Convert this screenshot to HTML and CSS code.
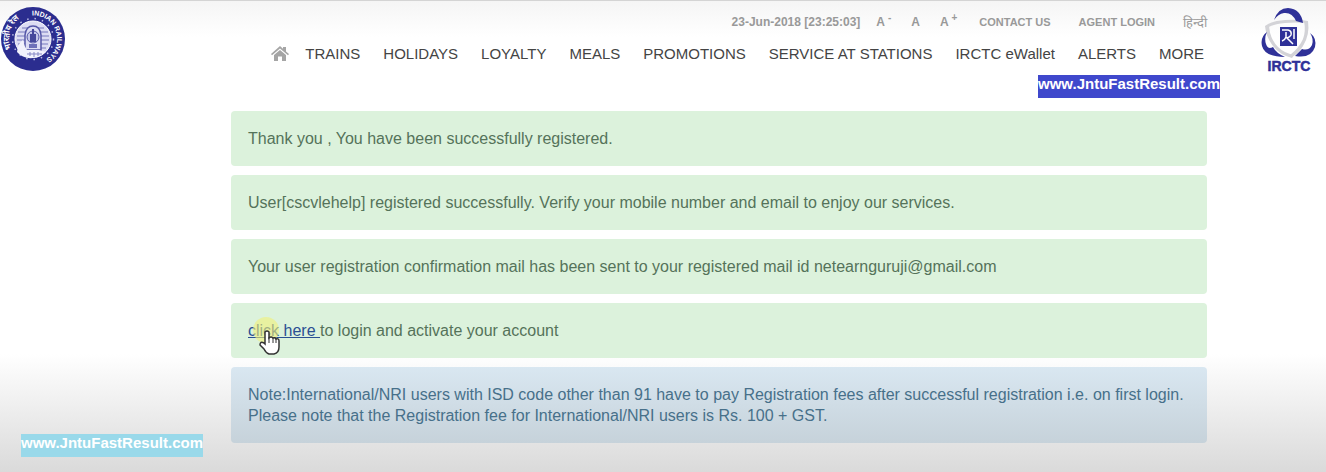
FILE: index.html
```html
<!DOCTYPE html>
<html lang="en">
<head>
    <meta charset="UTF-8">
    <title>IRCTC Registration</title>
    <link rel="stylesheet" href="styles.css">
</head>
<body>
    <header class="header">
        <a href="#" class="logo-rail" aria-label="Indian Railways">
            <svg width="66" height="66" viewBox="0 0 66 66">
                <defs>
                    <path id="arcRight" d="M32,9.500 A23.500,23.500 0 0 1 44,54"/>
                    <path id="arcLeft" d="M11,43 A24,24 0 0 1 27,9.700"/>
                </defs>
                <circle cx="33" cy="33" r="32" fill="#2b2d8f"/>
                <circle cx="33" cy="33" r="20.500" fill="none" stroke="#b9bbe4" stroke-width="1.500" stroke-dasharray="1.500 6"/>
                <circle cx="33" cy="33" r="18" fill="#dcdcf3" stroke="#fff" stroke-width="1"/>
                <path d="M18,26 H48 M17,30 H49 M17,34 H49 M18,38 H48 M20,42 H46 M22,22 H44" stroke="#7779bd" stroke-width="1"/>
                <!-- engine -->
                <path d="M25,44 V29 Q26,20 33,20 Q40,20 41,29 V44 Z" fill="#dcdcf3" stroke="#5557a8" stroke-width="1.500"/>
                <circle cx="33" cy="31" r="6" fill="#c3c5e8" stroke="#5557a8"/>
                <path d="M32,23 H34 V28 H36 V36 H30 V28 H32 Z" fill="#45479b"/>
                <path d="M29,38 H37 V42 H29 Z" fill="#6d6fb8"/>
                <path d="M17,46 Q18,37 23,34 Q24,40 27,44 H39 L46,46 Q40,52 33,52 Q23,53 17,46 Z" fill="#f2f2fc"/>
                <path d="M27,48 H42 M30,46 V50 M34,46 V51 M38,46 V50" stroke="#8587c5"/>
                <text class="seal-text"><textPath href="#arcRight">INDIAN RAILWAYS</textPath></text>
                <text class="seal-text seal-hindi" lang="hi"><textPath href="#arcLeft">भारतीय रेल</textPath></text>
            </svg>
        </a>

        <div class="header-main">
            <div class="topbar">
                <span class="date">23-Jun-2018 [23:25:03]</span>
                <div class="font-size">
                    <a href="#">A <sup>-</sup></a>
                    <a href="#">A</a>
                    <a href="#">A <sup>+</sup></a>
                </div>
                <div class="top-links">
                    <a href="#">CONTACT US</a>
                    <a href="#">AGENT LOGIN</a>
                    <a href="#" class="hindi" lang="hi">हिन्दी</a>
                </div>
            </div>
            <nav class="nav">
                <a href="#" class="home" aria-label="Home">
                    <svg width="18" height="16" viewBox="0 0 18 16">
                        <path d="M0,8 L9,0 L12,2.700 V1 H15 V5.400 L18,8 L17,9.300 L9,2.400 L1,9.300 Z" fill="#a5a5a5"/>
                        <path d="M3,9 L9,4 L15,9 V15 H11 V10.500 H7 V15 H3 Z" fill="#a5a5a5"/>
                    </svg>
                </a>
                <a href="#">TRAINS</a>
                <a href="#">HOLIDAYS</a>
                <a href="#">LOYALTY</a>
                <a href="#">MEALS</a>
                <a href="#">PROMOTIONS</a>
                <a href="#">SERVICE AT STATIONS</a>
                <a href="#">IRCTC eWallet</a>
                <a href="#">ALERTS</a>
                <a href="#">MORE</a>
            </nav>
        </div>

        <a href="#" class="logo-irctc" aria-label="IRCTC">
            <svg width="56" height="68" viewBox="0 0 56 68">
                <!-- grey swooshes -->
                <path d="M4,20 Q10,15 24,14 Q37,13 47,15 L46,17 Q35,16 24,17 Q12,18 6,22 Z" fill="#d3d3d7"/>
                <path d="M43,15 L47,15 Q49,29 42,40 Q37,48 31,51 L29,49 Q38,42 42,33 Q45,25 43,15 Z" fill="#d3d3d7"/>
                <path d="M4,20 L8,20 Q9,33 17,41 Q23,47 33,49 L31,52 Q19,49 12,40 Q5,31 4,20 Z" fill="#d3d3d7"/>
                <!-- blue swooshes -->
                <path d="M13,14 Q17,2 27,2 Q40,3 42,17 L35,15 Q31,6 23,7 Q17,8 13,14 Z" fill="#2f3198"/>
                <path d="M6,26 Q-1,31 1,40 Q4,51 24,51 Q15,47 12,41 Q7,44 5,38 Q3,32 6,26 Z" fill="#2f3198"/>
                <path d="M49,27 Q56,32 54,41 Q50,53 34,50 L41,43 Q48,45 51,39 Q53,33 49,27 Z" fill="#2f3198"/>
                <path d="M19,21 H36 V40 H19 Z" fill="#2f3198"/>
                <path d="M21,24 H27 Q31,25 30,29 Q29,31 26,32 L32,38 M25,26 V31 Q24,34 21,35 M33,23 V33" fill="none" stroke="#fff" stroke-width="1.500"/>
                <text x="28" y="65" text-anchor="middle" class="logo-text">IRCTC</text>
            </svg>
        </a>
        <span class="watermark watermark-top">www.JntuFastResult.com</span>
    </header>

    <main class="messages">
        <div class="alert success">Thank you , You have been successfully registered.</div>
        <div class="alert success">User[cscvlehelp] registered successfully. Verify your mobile number and email to enjoy our services.</div>
        <div class="alert success">Your user registration confirmation mail has been sent to your registered mail id netearnguruji@gmail.com</div>
        <div class="alert success">
            <a href="#" class="login-link">click here </a>to login and activate your account
            <svg class="cursor" width="34" height="44" viewBox="0 0 34 44">
                <circle cx="17" cy="14" r="13" fill="#f0f078" fill-opacity="0.600"/>
                <path d="M16,16 Q18,14 20,16 V22 Q22,20 24,22 Q26,21 27,23 Q30,22 30,25 V31 Q30,37 25,38 H20 Q17,37 15,33 L11,29 Q11,25 15,27 L16,28 Z" fill="#fff" stroke="#333" stroke-width="1.500"/>
                <path d="M20,21 V27 M24,22 V27 M27,23 V27" stroke="#333"/>
            </svg>
        </div>
        <div class="alert info">Note:International/NRI users with ISD code other than 91 have to pay Registration fees after successful registration i.e. on first login.<br>Please note that the Registration fee for International/NRI users is Rs. 100 + GST.</div>
    </main>
    <span class="watermark watermark-bottom">www.JntuFastResult.com</span>
</body>
</html>
```

FILE: styles.css
```css
* {
    box-sizing: border-box;
}

body {
    margin: 0;
    min-height: 100vh;
    position: relative;
    font-family: "Liberation Sans", Arial, sans-serif;
    font-size: 15px;
    background: linear-gradient(to bottom, #fff 0, #fff 75%, #dadada 100%);
}

a {
    color: inherit;
    text-decoration: none;
}

.header {
    position: relative;
    display: flex;
    align-items: flex-start;
    border-top: 1px solid #d4d4d4;
    background: linear-gradient(to bottom, #f5f5f5, #fff 36px);
}

.logo-rail {
    padding-top: 5px;
}

.logo-irctc {
    padding: 5px 9px 0 0;
}

.logo-rail svg,
.logo-irctc svg,
.home svg {
    display: block;
}

.seal-text {
    font-size: 7px;
    font-weight: bold;
    fill: #fff;
}

.seal-hindi {
    font-size: 8px;
}

.logo-text {
    font-size: 14px;
    font-weight: bold;
    fill: #2f3198;
    stroke: #2f3198;
    stroke-width: 0.5px;
}

.header-main {
    flex: 1;
    display: flex;
    flex-direction: column;
    align-items: flex-end;
    gap: 14px;
    padding: 13px 54px 0 0;
}

.topbar {
    display: flex;
    align-items: center;
    gap: 16px;
    height: 16px;
    font-size: 11px;
    font-weight: bold;
    color: #999;
}

.date {
    font-size: 12px;
}

.font-size {
    display: flex;
    gap: 20px;
    padding-right: 6px;
    font-size: 12px;
}

.font-size sup {
    line-height: 0;
}

.top-links {
    display: flex;
    align-items: center;
    gap: 28px;
}

.hindi {
    font-size: 13px;
    font-weight: normal;
}

.nav {
    display: flex;
    align-items: center;
    gap: 23px;
    padding-right: 3px;
    line-height: 20px;
    color: #444;
}

.home {
    margin-right: -7px;
}

.messages {
    display: flex;
    flex-direction: column;
    gap: 9px;
    margin: 37px 119px 0 231px;
}

.alert {
    position: relative;
    padding: 17px;
    border-radius: 4px;
    font-size: 16px;
    line-height: 21px;
}

.success {
    background: #dcf2dc;
    color: #55735a;
}

.info {
    background: linear-gradient(to bottom, #d9e7f1, #c6d2da);
    color: #47708a;
}

.login-link {
    color: #2b4f93;
    text-decoration: underline;
    white-space: pre;
}

.cursor {
    position: absolute;
    top: 13px;
    left: 18px;
}

.watermark {
    position: absolute;
    height: 23px;
    font-size: 15px;
    font-weight: bold;
    line-height: 18px;
    color: #fff;
}

.watermark-top {
    top: 74px;
    right: 106px;
    background: #3f48cc;
}

.watermark-bottom {
    bottom: 15px;
    left: 21px;
    background: #99d9ea;
}
```
